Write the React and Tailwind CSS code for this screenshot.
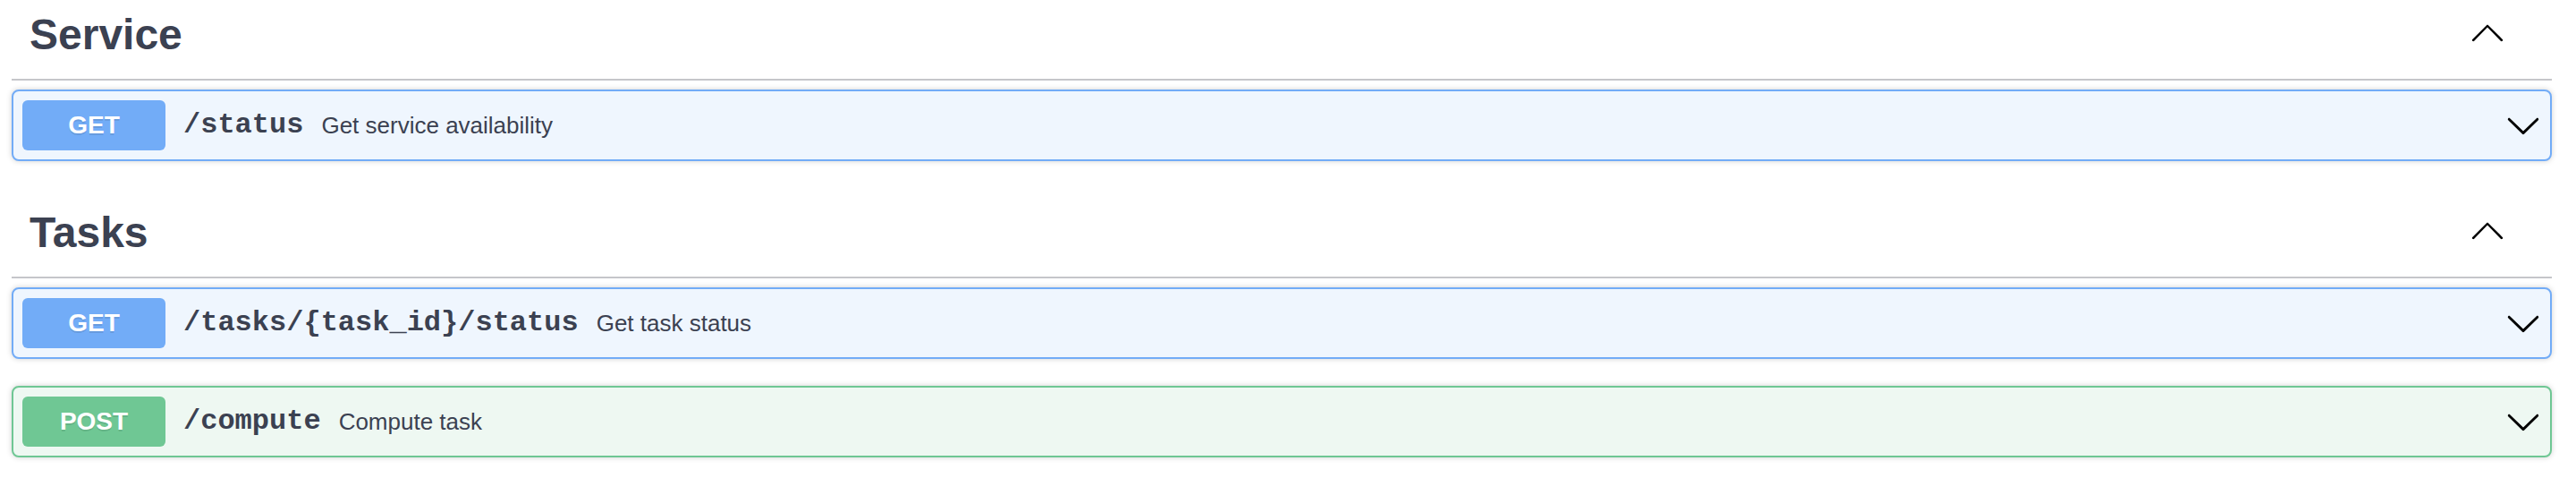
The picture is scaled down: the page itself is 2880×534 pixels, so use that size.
const sections = [
  {
    name: "Service",
    ops: [{ method: "GET", path: "/status", summary: "Get service availability" }],
  },
  {
    name: "Tasks",
    ops: [
      { method: "GET", path: "/tasks/{task_id}/status", summary: "Get task status" },
      { method: "POST", path: "/compute", summary: "Compute task" },
    ],
  },
];

const methodStyles = {
  GET: { block: "border-[#72acf7] bg-[#eff6fe]", badge: "bg-[#72acf7]" },
  POST: { block: "border-[#6fc794] bg-[#eef8f2]", badge: "bg-[#6fc794]" },
};

function Arrow({ up }) {
  return (
    <svg viewBox="0 0 20 20" className="h-10 w-10 shrink-0 fill-black" aria-hidden="true">
      {up ? (
        <path d="M17.418 14.908c.272.268.709.268.979 0s.271-.701 0-.969l-7.908-7.83c-.27-.268-.707-.268-.979 0l-7.908 7.83c-.27.268-.27.701 0 .969.271.268.709.268.979 0L10 7.242l7.418 7.666z" />
      ) : (
        <path d="M17.418 6.109c.272-.268.709-.268.979 0s.271.701 0 .969l-7.908 7.83c-.27.268-.707.268-.979 0l-7.908-7.83c-.27-.268-.27-.701 0-.969.271-.268.709-.268.979 0L10 13.25l7.418-7.141z" />
      )}
    </svg>
  );
}

function Operation({ op }) {
  const s = methodStyles[op.method];
  return (
    <div className={`mb-[30px] rounded-lg border-2 shadow-[0_0_6px_rgba(0,0,0,0.19)] ${s.block}`}>
      <div className="flex items-center p-[10px]">
        <span
          className={`flex h-[56px] w-[160px] shrink-0 items-center justify-center rounded-md text-[28px] font-bold text-white [text-shadow:0_2px_0_rgba(0,0,0,0.1)] ${s.badge}`}
        >
          {op.method}
        </span>
        <span className="px-5 font-['Liberation_Mono',monospace] text-[32px] font-bold text-[#3b4151]">
          {op.path}
        </span>
        <span className="flex-1 text-[26px] text-[#3b4151]">{op.summary}</span>
        <Arrow />
      </div>
    </div>
  );
}

export default function App() {
  return (
    <div className="-mt-[11px] bg-white pl-[13px] pr-[27px] font-['Liberation_Sans',Arial,sans-serif]">
      {sections.map((sec) => (
        <div key={sec.name}>
          <h3 className="mb-[10px] flex h-[101px] items-center border-b-2 border-[#c5c6ca] pl-5 pr-[52px]">
            <span className="flex-1 text-[48px] font-bold text-[#3b4151]">{sec.name}</span>
            <span className="-translate-y-[3px]">
              <Arrow up />
            </span>
          </h3>
          {sec.ops.map((op) => (
            <Operation key={op.method + op.path} op={op} />
          ))}
        </div>
      ))}
    </div>
  );
}
